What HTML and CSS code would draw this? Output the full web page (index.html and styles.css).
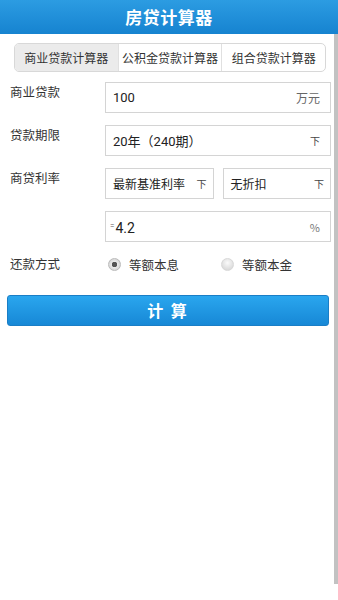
FILE: index.html
```html
<!DOCTYPE html>
<html>
<head>
<meta charset="utf-8">
<link rel="stylesheet" href="styles.css">
</head>
<body>
<div class="header">房贷计算器</div>
<div class="main">
  <div class="content">
    <div class="tabs">
      <div class="tab active">商业贷款计算器</div>
      <div class="tab">公积金贷款计算器</div>
      <div class="tab">组合贷款计算器</div>
    </div>
    <div class="row r1">
      <div class="label">商业贷款</div>
      <div class="fields"><div class="box"><span class="val">100</span><span class="unit">万元</span></div></div>
    </div>
    <div class="row">
      <div class="label">贷款期限</div>
      <div class="fields"><div class="box"><span class="val">20年（240期）</span><span class="arrow">下</span></div></div>
    </div>
    <div class="row">
      <div class="label">商贷利率</div>
      <div class="fields split">
        <div class="box"><span class="val">最新基准利率</span><span class="arrow">下</span></div>
        <div class="box"><span class="val">无折扣</span><span class="arrow">下</span></div>
      </div>
    </div>
    <div class="row">
      <div class="label"></div>
      <div class="fields"><div class="box rate"><span class="val"><span class="eq">=</span>4.2</span><span class="unit pct">%</span></div></div>
    </div>
    <div class="row radios">
      <div class="label">还款方式</div>
      <div class="opts">
        <div class="opt"><span class="radio checked"></span>等额本息</div>
        <div class="opt"><span class="radio"></span>等额本金</div>
      </div>
    </div>
    <div class="btn">计 算</div>
  </div>
  <div class="scrollbar"></div>
</div>
</body>
</html>
```
FILE: styles.css
```css
* { box-sizing: border-box; }
html, body { margin: 0; padding: 0; background: #fff; }
body {
  width: 338px;
  font-family: "Noto Sans CJK SC", "Noto Sans", sans-serif;
  color: #333;
}
.header {
  height: 34px;
  background: linear-gradient(#2c9ce2, #1683d0);
  color: #fff;
  font-size: 17px;
  font-weight: bold;
  text-align: center;
  line-height: 34px;
  letter-spacing: 0.5px;
}
.main { display: flex; }
.content { width: 334px; }
.scrollbar { width: 4px; height: 550px; background: #c2c2c2; }
.tabs {
  display: flex;
  margin: 9px 8px 0 14px;
  height: 29px;
  border: 1px solid #d8d8d8;
  border-radius: 5px;
  overflow: hidden;
}
.tab {
  flex: 1;
  font-size: 12px;
  line-height: 27px;
  text-align: center;
  color: #333;
  border-left: 1px solid #e0e0e0;
  white-space: nowrap;
}
.tab:first-child { border-left: none; background: #ebebeb; }
.row { display: flex; margin-top: 12px; }
.row.r1 { margin-top: 10px; }
.label {
  width: 105px;
  padding-left: 10px;
  padding-top: 2px;
  font-size: 12.5px;
  color: #333;
  line-height: 16px;
}
.fields { flex: 1; margin-right: 3px; display: flex; gap: 9px; }
.box {
  flex: 1;
  height: 31px;
  border: 1px solid #d4d4d4;
  display: flex;
  align-items: center;
  justify-content: space-between;
  padding: 0 10px 0 7px;
}
.val {
  font-family: "Roboto", "Noto Sans CJK SC", sans-serif;
  font-size: 13px;
  color: #222;
}
.unit { font-size: 12px; color: #666; }
.pct { font-size: 11px; color: #777; }
.arrow { font-size: 10px; color: #444; }
.split .box { padding-right: 6px; }
.split .val { font-size: 12px; }
.eq { font-size: 8px; vertical-align: 5px; color: #555; margin-right: 1px; margin-left: -3px; }
.rate .val { font-size: 14px; padding-top: 3px; }
.radios { margin-top: 14px; align-items: center; height: 16px; }
.radios .label { padding-top: 0; }
.opts { display: flex; flex: 1; }
.opt {
  width: 113px;
  display: flex;
  align-items: center;
  font-size: 12.5px;
  color: #333;
  padding-left: 3px;
}
.radio {
  width: 13px; height: 13px;
  border-radius: 50%;
  margin-right: 8px;
  background: radial-gradient(circle at 50% 35%, #fafafa, #d0d0d0);
  border: 1px solid #d8d8d8;
}
.radio.checked {
  background: radial-gradient(circle, #555 0 2.5px, #eaeaea 3px, #c8c8c8 100%);
  border-color: #bbb;
}
.btn {
  margin: 23px 5px 0 7px;
  height: 31px;
  border-radius: 3px;
  background: linear-gradient(#2aa6ee, #1788d6);
  border: 1px solid #1a7ec6;
  color: #fff;
  font-size: 16px;
  font-weight: bold;
  text-align: center;
  line-height: 29px;
  letter-spacing: 2px;
}
```
